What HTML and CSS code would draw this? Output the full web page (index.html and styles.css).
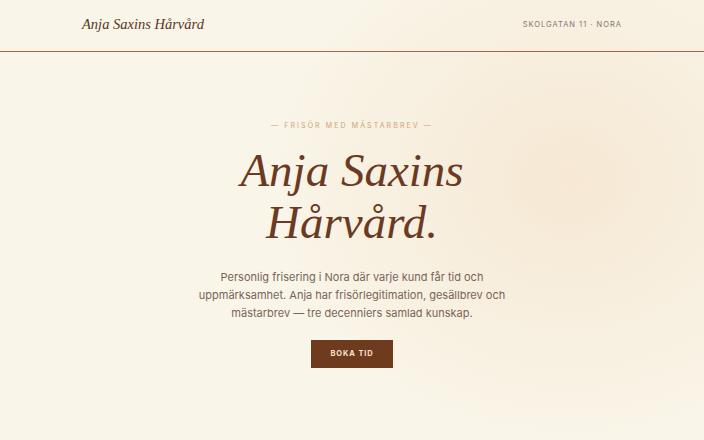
FILE: index.html
```html
<!DOCTYPE html>
<html lang="sv">
<head>
    <meta charset="UTF-8">
    <meta name="viewport" content="width=device-width, initial-scale=1.0">
    <title>Anja Saxins Hårvård</title>
    <link rel="stylesheet" href="styles.css">
</head>
<body>
    <!-- sidhuvud -->
    <header class="site-header">
        <div class="wrap header-row">
            <a href="#" class="logo">Anja Saxins Hårvård</a>
            <span class="address">Skolgatan 11 · Nora</span>
        </div>
    </header>

    <section class="hero">
        <p class="eyebrow">— Frisör med mästarbrev —</p>
        <h1 class="hero-title">Anja Saxins<br>Hårvård.</h1>
        <p class="hero-text">Personlig frisering i Nora där varje kund får tid och uppmärksamhet. Anja har frisörlegitimation, gesällbrev och mästarbrev — tre decenniers samlad kunskap.</p>
        <a href="#" class="book-button">Boka tid</a>
    </section>
</body>
</html>
```

FILE: styles.css
```css
html, body {
    margin: 0;
    height: 100%;
}
body {
    font-family: "Inter", "Noto Sans", sans-serif;
    color: #6f5a50;
    background-color: #f9f5e8;
    background-image: radial-gradient(ellipse 300px 260px at 570px 180px, #f6e8d4 0%, rgba(246, 232, 212, 0.55) 45%, rgba(249, 245, 232, 0) 100%);
}
.wrap {
    max-width: 540px;
    margin: 0 auto;
}
.site-header {
    height: 51px;
    border-bottom: 1px solid #a8663f;
}
.header-row {
    height: 100%;
    display: flex;
    align-items: center;
    justify-content: space-between;
}
.logo {
    font-family: "Liberation Serif", serif;
    font-style: italic;
    font-size: 14.5px;
    color: #5a3626;
    text-decoration: none;
    margin-top: -2px;
}
.address {
    font-size: 7.5px;
    letter-spacing: 1px;
    text-transform: uppercase;
    color: #857470;
    margin-top: -2px;
}
.hero {
    text-align: center;
    padding-top: 69px;
}
.eyebrow {
    margin: 0;
    font-size: 7px;
    letter-spacing: 2.1px;
    text-transform: uppercase;
    color: #cfa276;
}
.hero-title {
    margin: 14px 0 0;
    font-family: "Liberation Serif", serif;
    font-style: italic;
    font-weight: normal;
    font-size: 47px;
    line-height: 52px;
    color: #6b3a22;
}
.hero-text {
    width: 312px;
    margin: 20px auto 0;
    font-size: 11px;
    line-height: 18px;
    color: #7a6459;
}
.book-button {
    display: inline-block;
    margin-top: 18px;
    width: 82px;
    height: 28px;
    line-height: 28px;
    background-color: #6e3b1f;
    color: #f6e4c8;
    font-size: 7.5px;
    font-weight: 700;
    letter-spacing: 0.9px;
    text-transform: uppercase;
    text-decoration: none;
}
```
